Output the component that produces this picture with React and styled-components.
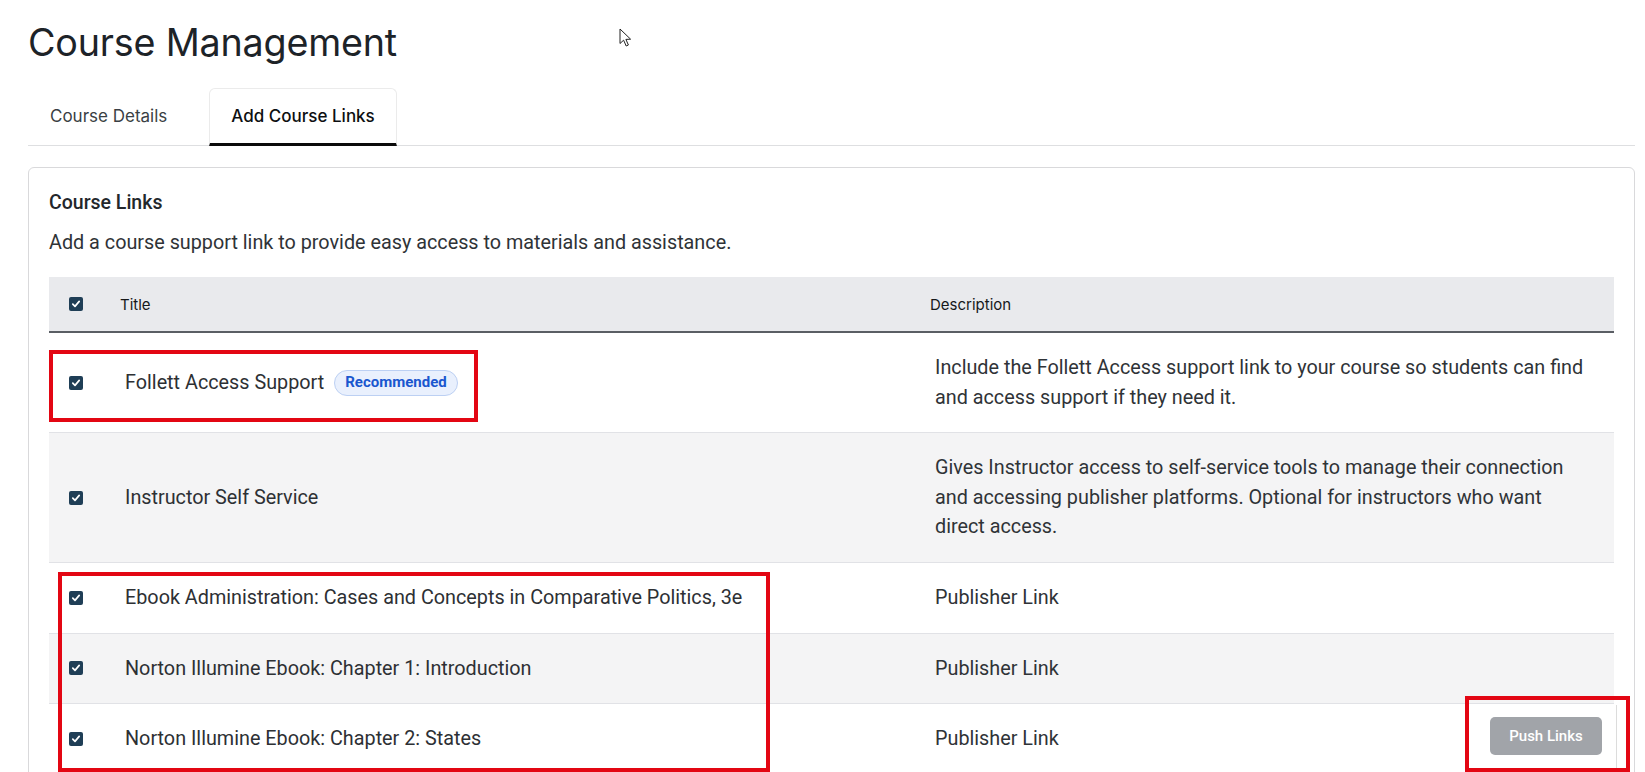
import React from 'react';
import styled, { createGlobalStyle } from 'styled-components';

const GlobalStyle = createGlobalStyle`
	html, body {
		margin: 0;
		padding: 0;
		background: #ffffff;
		overflow: hidden;
	}
	body {
		font-family: Roboto, "Liberation Sans", sans-serif;
		color: #2b2f33;
	}
`;

const links = [
	{
		title: 'Follett Access Support',
		badge: 'Recommended',
		description:
			'Include the Follett Access support link to your course so students can find and access support if they need it.',
	},
	{
		title: 'Instructor Self Service',
		description:
			'Gives Instructor access to self-service tools to manage their connection and accessing publisher platforms. Optional for instructors who want direct access.',
	},
	{
		title: 'Ebook Administration: Cases and Concepts in Comparative Politics, 3e',
		description: 'Publisher Link',
	},
	{
		title: 'Norton Illumine Ebook: Chapter 1: Introduction',
		description: 'Publisher Link',
	},
	{
		title: 'Norton Illumine Ebook: Chapter 2: States',
		description: 'Publisher Link',
	},
];

const Checkbox = () => (
	<Box>
		<svg width='10' height='10' viewBox='0 0 10 10'>
			<path d='M1.8 5.2 L4 7.4 L8.2 2.4' fill='none' stroke='#fff' strokeWidth='1.7' strokeLinecap='round' strokeLinejoin='round' />
		</svg>
	</Box>
);

const Cursor = () => (
	<CursorMark width='13' height='20' viewBox='0 0 13 20'>
		<path d='M1 1 L1 15.5 L4.6 12.2 L7.2 18 L9.4 17 L6.9 11.4 L11.6 11.2 Z' fill='#fff' stroke='#222' strokeWidth='1' strokeLinejoin='round' />
	</CursorMark>
);

const App = () => {
	return (
		<Page>
			<GlobalStyle />
			<Title>Course Management</Title>
			<Tabs>
				<Tab>Course Details</Tab>
				<Tab $active>Add Course Links</Tab>
			</Tabs>
			<Card>
				<CardTitle>Course Links</CardTitle>
				<CardText>Add a course support link to provide easy access to materials and assistance.</CardText>
				<Table>
					<HeadRow>
						<CheckCell>
							<Checkbox />
						</CheckCell>
						<HeadCell>Title</HeadCell>
						<HeadCell>Description</HeadCell>
					</HeadRow>
					{links.map((link, i) => (
						<Row key={link.title} $striped={i % 2 === 1}>
							<CheckCell>
								<Checkbox />
							</CheckCell>
							<TitleCell>
								{link.title}
								{link.badge && <Badge>{link.badge}</Badge>}
							</TitleCell>
							<DescCell>{link.description}</DescCell>
						</Row>
					))}
				</Table>
			</Card>

			<Footer>
				<PushButton disabled>Push Links</PushButton>
			</Footer>

			<Highlight style={{ left: 49, top: 350, width: 429, height: 72 }} />
			<Highlight style={{ left: 58, top: 572, width: 712, height: 200 }} />
			<Highlight style={{ left: 1465, top: 696, width: 165, height: 76 }} />
			<Cursor />
		</Page>
	);
};

const Page = styled.div`
	position: relative;
	padding: 19px 10px 40px 28px;
	min-height: 772px;
	box-sizing: border-box;
`;

const Title = styled.h1`
	margin: 0;
	font-family: Inter, Roboto, sans-serif;
	font-size: 37.7px;
	line-height: 46px;
	font-weight: 400;
	color: #1d2328;
	letter-spacing: -0.2px;
`;

const Tabs = styled.div`
	display: flex;
	gap: 20px;
	margin-top: 23px;
	border-bottom: 1px solid #dedfe1;
`;

const Tab = styled.div`
	display: flex;
	align-items: center;
	height: 54px;
	padding: 0 21px;
	margin-bottom: -1px;
	font-family: Inter, Roboto, sans-serif;
	font-size: 17px;
	font-weight: ${(p) => (p.$active ? 500 : 400)};
	color: ${(p) => (p.$active ? '#0d0f11' : '#3a3f44')};
	border: 1px solid ${(p) => (p.$active ? '#ebebeb' : 'transparent')};
	border-bottom: 3px solid ${(p) => (p.$active ? '#0b0b0b' : 'transparent')};
	border-radius: 6px 6px 0 0;
`;

const Card = styled.section`
	margin-top: 21px;
	padding: 22px 20px 0 20px;
	border: 1px solid #d9d9db;
	border-radius: 6px;
	min-height: 700px;
`;

const CardTitle = styled.h2`
	margin: 0;
	font-size: 19.5px;
	line-height: 26px;
	font-weight: 500;
	color: #23272b;
`;

const CardText = styled.p`
	margin: 12px 0 19px;
	font-size: 19.8px;
	line-height: 30px;
	color: #2f3337;
`;

const Table = styled.div`
	display: grid;
	grid-template-columns: 56px 810px 1fr;
`;

const HeadRow = styled.div`
	display: contents;

	& > * {
		height: 54px;
		background: #e9eaed;
		border-bottom: 2px solid #5a5e64;
	}
`;

const Row = styled.div`
	display: contents;

	& > * {
		background: ${(p) => (p.$striped ? '#f4f4f5' : '#ffffff')};
		border-bottom: 1px solid #e1e2e6;
	}
`;

const CheckCell = styled.div`
	display: flex;
	align-items: center;
	padding-left: 20px;
`;

const HeadCell = styled.div`
	display: flex;
	align-items: center;
	padding-left: 15px;
	font-family: Inter, Roboto, sans-serif;
	font-size: 15px;
	color: #16181a;
`;

const TitleCell = styled.div`
	display: flex;
	align-items: center;
	gap: 10px;
	padding: 20px;
	font-size: 19.8px;
	line-height: 29.6px;
	color: #2d3034;
`;

const DescCell = styled.div`
	display: flex;
	align-items: center;
	padding: 20px 24px 20px 20px;
	font-size: 19.8px;
	line-height: 29.6px;
	color: #2f3337;
`;

const Box = styled.span`
	display: inline-flex;
	align-items: center;
	justify-content: center;
	width: 14px;
	height: 14px;
	border-radius: 2px;
	background: #1f3e56;
`;

const Badge = styled.span`
	display: inline-flex;
	align-items: center;
	height: 24px;
	padding: 0 10px;
	border: 1px solid #bcd0f3;
	border-radius: 13px;
	background: #e9f0fd;
	font-size: 15px;
	font-weight: 700;
	color: #1a57cf;
`;

const Footer = styled.div`
	position: absolute;
	left: 1470px;
	top: 705px;
	width: 147px;
	height: 80px;
	display: flex;
	justify-content: flex-start;
	padding: 12px 0 0 20px;
	box-sizing: border-box;
	border-right: 1px solid #dcdcdc;
	background: #ffffff;
`;

const PushButton = styled.button`
	width: 112px;
	height: 38px;
	border: none;
	border-radius: 5px;
	background: #a1a4a9;
	color: #ffffff;
	font-family: Roboto, sans-serif;
	font-size: 15px;
	font-weight: 500;
`;

const Highlight = styled.div`
	position: absolute;
	box-sizing: border-box;
	border: 4px solid #e30613;
	pointer-events: none;
`;

const CursorMark = styled.svg`
	position: absolute;
	left: 619px;
	top: 28px;
`;

export default App;
